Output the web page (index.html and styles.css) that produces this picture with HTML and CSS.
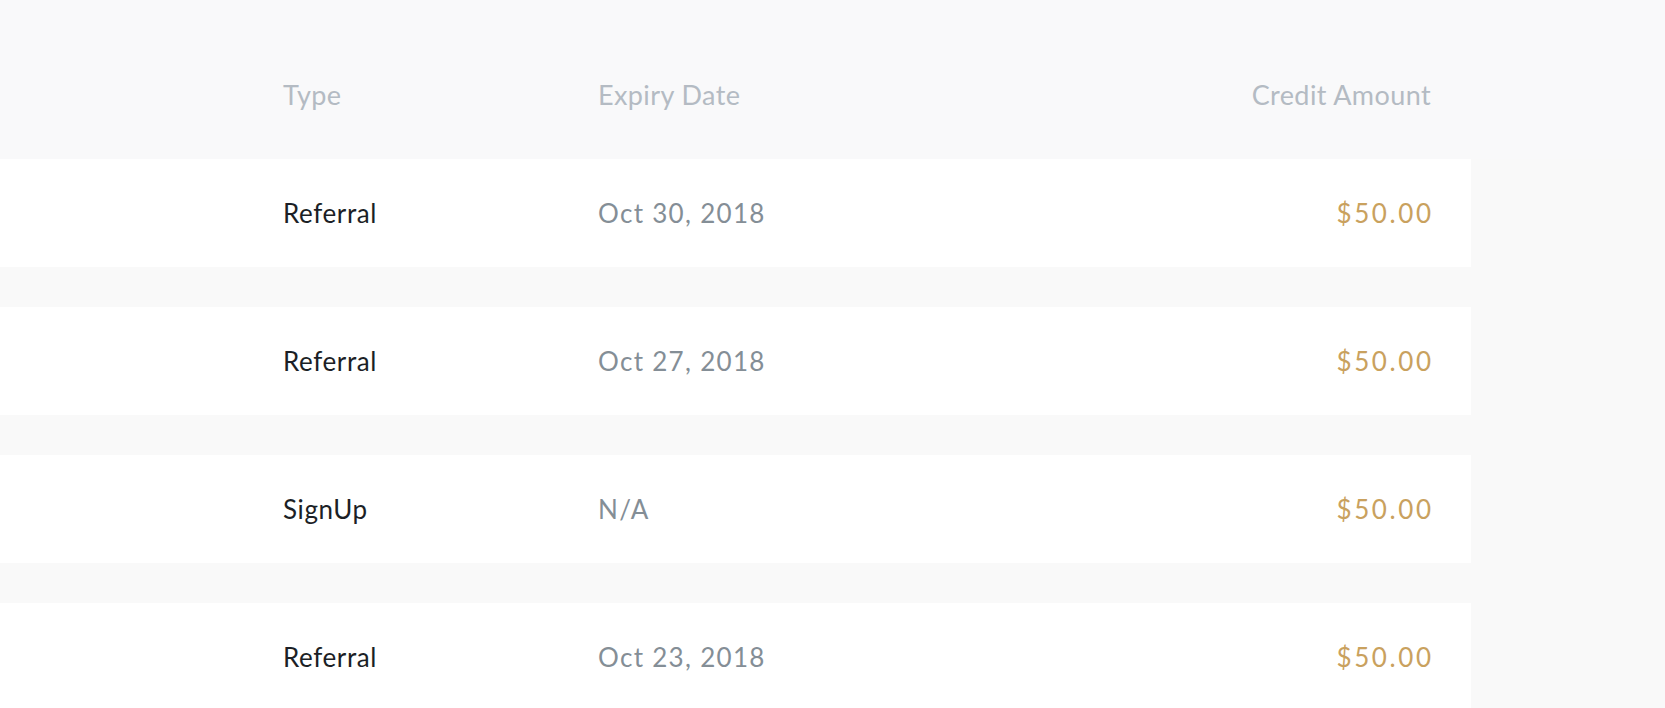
FILE: index.html
```html
<!DOCTYPE html>
<html lang="en">
<head>
<meta charset="utf-8">
<title>Credits</title>
<link rel="stylesheet" href="styles.css">
</head>
<body>
<div class="credits">
  <div class="credits-head">
    <div class="cell">Type</div>
    <div class="cell">Expiry Date</div>
    <div class="cell amount">Credit Amount</div>
  </div>
  <div class="credits-row">
    <div class="cell type">Referral</div>
    <div class="cell date">Oct 30, 2018</div>
    <div class="cell amount">$50.00</div>
  </div>
  <div class="credits-row">
    <div class="cell type">Referral</div>
    <div class="cell date">Oct 27, 2018</div>
    <div class="cell amount">$50.00</div>
  </div>
  <div class="credits-row">
    <div class="cell type">SignUp</div>
    <div class="cell date">N/A</div>
    <div class="cell amount">$50.00</div>
  </div>
  <div class="credits-row">
    <div class="cell type">Referral</div>
    <div class="cell date">Oct 23, 2018</div>
    <div class="cell amount">$50.00</div>
  </div>
</div>
</body>
</html>
```

FILE: styles.css
```css
html, body {
  margin: 0;
  padding: 0;
  background: #f9f9f9;
}

body {
  font-family: "Lato", "Noto Sans", sans-serif;
  overflow: hidden;
}

.credits {
  width: 1471px;
  display: flex;
  flex-direction: column;
  gap: 40px;
}

.credits-head,
.credits-row {
  display: grid;
  grid-template-columns: 315px 1fr auto;
  padding: 0 40px 0 283px;
  box-sizing: border-box;
}

.credits-head {
  height: 159px;
  padding-top: 78px;
  padding-right: 234px;
  width: 1665px;
  margin-bottom: -40px;
  align-items: start;
  font-size: 27px;
  line-height: 34px;
  letter-spacing: 0.4px;
  color: #b4bbc3;
  background: #f9f9fa;
}

.credits-row {
  height: 108px;
  align-items: center;
  background: #ffffff;
  font-size: 26px;
  line-height: 32px;
}

.type {
  color: #1c1f26;
  letter-spacing: 0.6px;
}

.date {
  color: #848e96;
  letter-spacing: 1.3px;
}

.credits-row .amount {
  color: #c9a15e;
  letter-spacing: 2.6px;
  margin-right: -2.6px;
}

.amount {
  text-align: right;
}
```
